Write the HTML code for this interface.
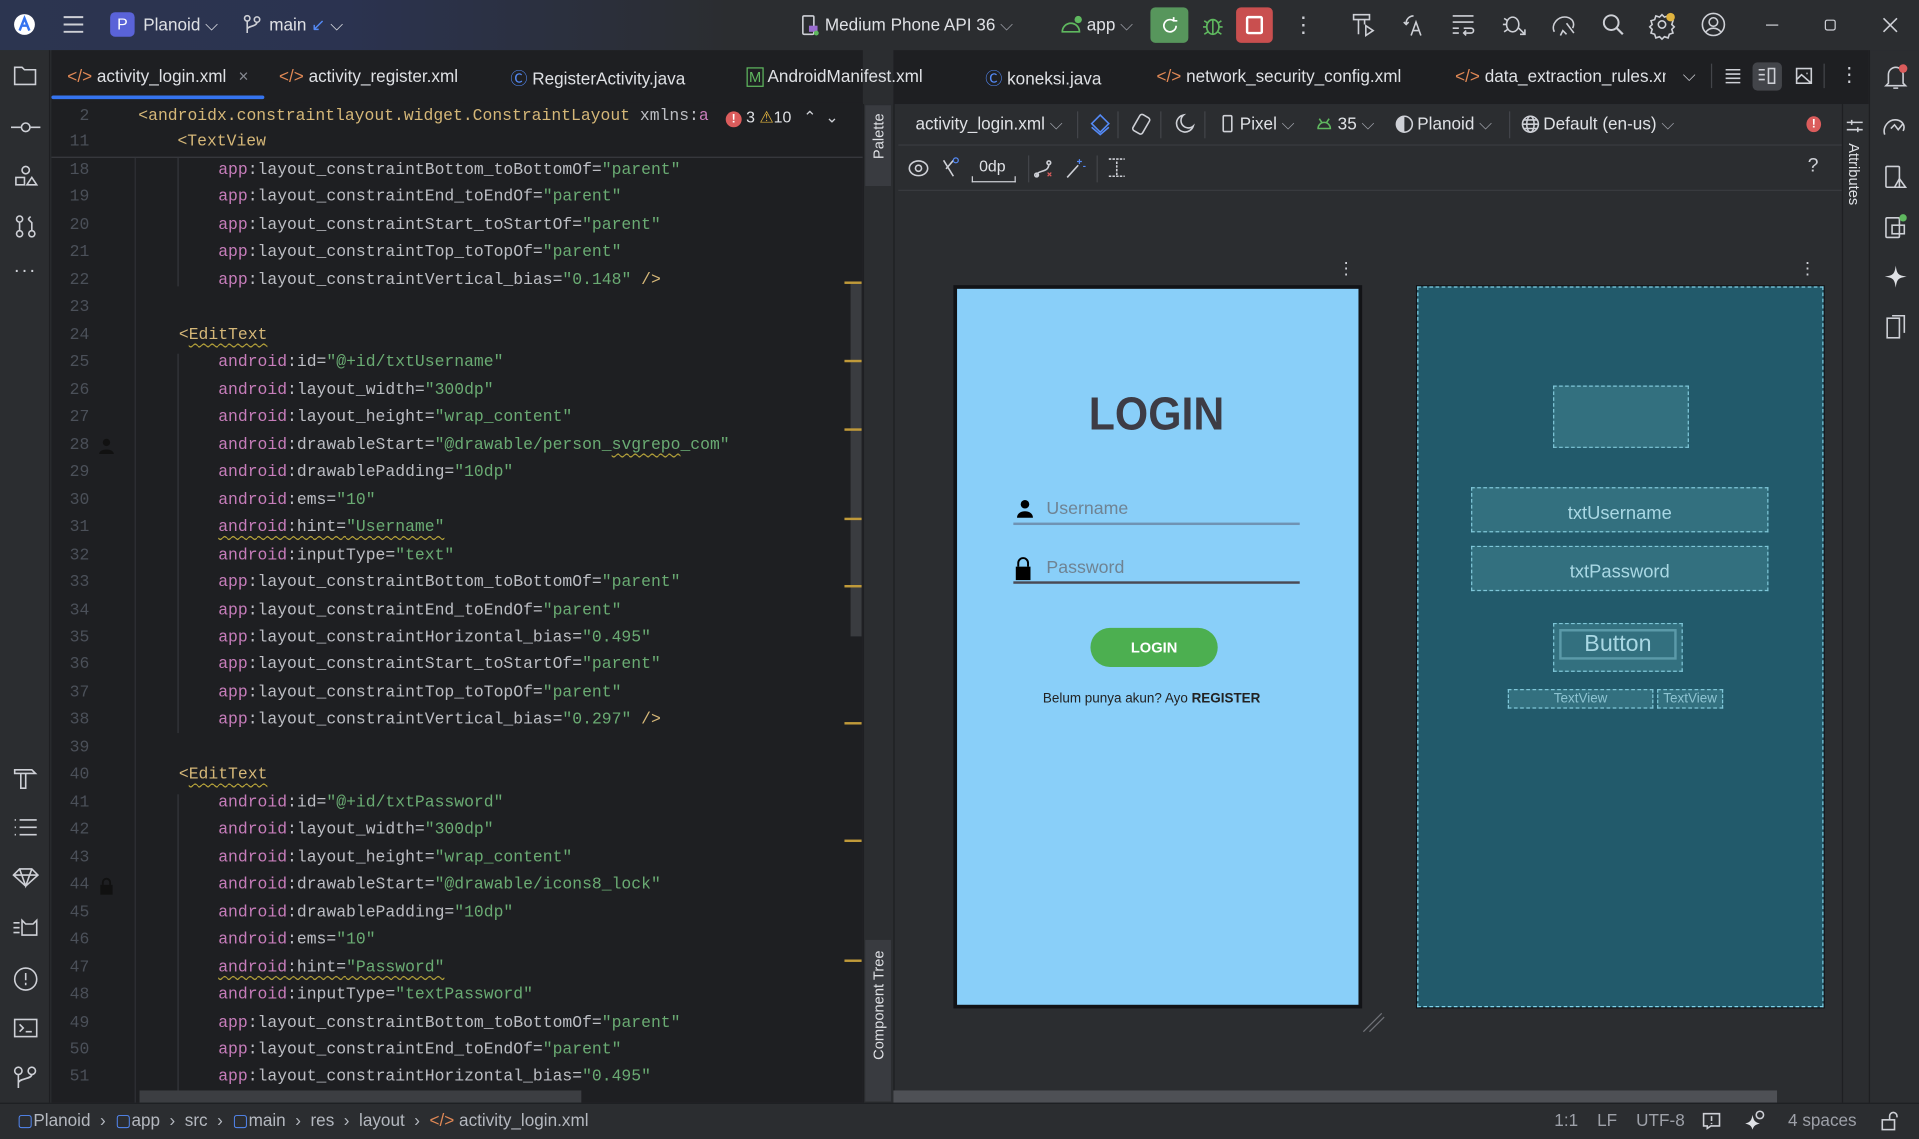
<!DOCTYPE html>
<html><head><meta charset="utf-8"><style>
*{box-sizing:border-box;margin:0;padding:0}
html,body{width:1919px;height:1139px;overflow:hidden;background:#2b2d30}
#w{position:absolute;left:0;top:0;width:1568px;height:931px;transform:scale(1.22385);transform-origin:0 0;font-family:"Liberation Sans",sans-serif;color:#dfe1e5;font-size:14px;background:#2b2d30;overflow:hidden}
.a{position:absolute}
.t{position:absolute;white-space:nowrap}
svg{position:absolute;overflow:visible}
.ic{fill:none;stroke:#ced0d6;stroke-width:1.3}
.code{position:absolute;left:41px;font-family:"Liberation Mono",monospace;font-size:13.4px;white-space:normal}
.ln{color:#4b5059;position:absolute;width:32px;text-align:right;left:0}
.cl{position:absolute;left:73px;color:#bcbec4;white-space:pre}
.p{color:#c77dbb}.g{color:#6aab73}.y{color:#d5b778}
.u{text-decoration:underline wavy #b5a23a;text-decoration-thickness:1px;text-underline-offset:3px}
.mk{position:absolute;left:690px;width:14px;height:2px;background:#c09a3a}
.sep{position:absolute;width:1px;background:#43454a}
#c>div{position:relative;height:22.48px}
</style></head><body><div id="w">
<div class="a" style="left:0;top:0;width:1568px;height:41px;background:linear-gradient(90deg,#2c3550 0%,#2b3350 18%,#2b2d30 38%)"></div>
<svg style="left:11px;top:11px" width="20" height="20"><circle cx="9" cy="9" r="8.5" fill="#fff"/><path d="M5 14 L9 4 L13 14 M6.5 10 H11.5" stroke="#3574f0" stroke-width="2" fill="none"/></svg>
<svg style="left:52px;top:13px" width="16" height="14"><path class="ic" d="M0 1H16M0 7H16M0 13H16" style="stroke-width:1.6"/></svg>
<div class="a" style="left:90px;top:10px;width:20px;height:20px;background:#5a63d8;border-radius:4px;color:#fff;font-size:13px;text-align:center;line-height:20px">P</div>
<div class="t" style="left:117px;top:12px;font-size:14px">Planoid ⌵</div>
<svg style="left:199px;top:12px" width="14" height="16"><circle class="ic" cx="3" cy="3" r="2.2"/><circle class="ic" cx="11" cy="4" r="2.2"/><path class="ic" d="M3 5V15M11 6C11 10 3 9 3 12"/></svg>
<div class="t" style="left:220px;top:12px">main <span style="color:#548af7">↙</span> ⌵</div>
<svg style="left:655px;top:12px" width="16" height="18"><rect class="ic" x="1" y="1" width="9" height="15" rx="1"/><rect x="6" y="9" width="7" height="5" fill="#9a6ccf"/><circle cx="12" cy="15" r="2" fill="#5fb85f"/></svg>
<div class="t" style="left:674px;top:12px">Medium Phone API 36 <span style="color:#9da0a8">⌵</span></div>
<svg style="left:866px;top:12px" width="18" height="16"><path d="M2 14a7 7 0 0 1 14 0z" fill="none" stroke="#5fb85f" stroke-width="1.4"/><circle cx="15" cy="4" r="3" fill="#5fb85f"/></svg>
<div class="t" style="left:888px;top:12px">app <span style="color:#9da0a8">⌵</span></div>
<div class="a" style="left:940px;top:6px;width:31px;height:29px;background:#57965c;border-radius:4px"></div>
<svg style="left:948px;top:13px" width="16" height="16"><path d="M13 8a5 5 0 1 1-2-4M11 1v3h3" fill="none" stroke="#fff" stroke-width="1.4"/></svg>
<svg style="left:982px;top:12px" width="18" height="18"><ellipse cx="9" cy="10" rx="5" ry="6" fill="none" stroke="#5fb85f" stroke-width="1.4"/><path d="M1 10h3M14 10h3M2 5l3 2M16 5l-3 2M2 16l3-2M16 16l-3-2M9 4v12" stroke="#5fb85f" stroke-width="1.3"/></svg>
<div class="a" style="left:1010px;top:6px;width:30px;height:29px;background:#c94f4f;border-radius:4px"></div>
<div class="a" style="left:1018px;top:13px;width:14px;height:15px;border:2px solid #fff;border-radius:2px"></div>
<div class="t" style="left:1056px;top:10px;font-size:18px;color:#ced0d6">⋮</div>
<svg style="left:1105px;top:10px" width="20" height="20"><path class="ic" d="M1 2h13v4H1zM5 6v12M10 6v4M11 11l6 4-6 4z"/></svg>
<svg style="left:1146px;top:10px" width="20" height="20"><path class="ic" d="M9 3a6 6 0 0 0-6 7M1 8l2 2 2-2M7 19l4-11 4 11M8.5 15h5"/></svg>
<svg style="left:1187px;top:12px" width="18" height="16"><path class="ic" d="M0 1h17M0 6h17M0 11h5M0 15h5M9 11h6a2 2 0 0 1 0 4H9M11 13l-2 2 2 2"/></svg>
<svg style="left:1227px;top:10px" width="20" height="20"><ellipse class="ic" cx="9" cy="10" rx="5" ry="6"/><path class="ic" d="M1 10h3M2 5l3 2M2 16l3-2M14 13l5 5M19 14v4h-4"/></svg>
<svg style="left:1267px;top:10px" width="22" height="20"><path class="ic" d="M3 16c-3-6 3-13 10-12 5 1 7 5 5 9M8 19l2-4 3 3M13 9l6 8"/></svg>
<svg style="left:1309px;top:11px" width="18" height="18"><circle class="ic" cx="7.5" cy="7.5" r="6" style="stroke-width:1.6"/><path class="ic" d="M12 12l5 5" style="stroke-width:1.8"/></svg>
<svg style="left:1349px;top:10px" width="20" height="20"><circle class="ic" cx="9" cy="10" r="3"/><path class="ic" d="M9 2l2 2 3-1 1 3 3 1-1 3 2 2-2 2 1 3-3 1-1 3-3-1-2 2-2-2-3 1-1-3-3-1 1-3-2-2 2-2-1-3 3-1 1-3 3 1z"/><circle cx="16" cy="4" r="3.5" fill="#e0b33f"/></svg>
<svg style="left:1390px;top:10px" width="20" height="20"><circle class="ic" cx="10" cy="10" r="9"/><circle class="ic" cx="10" cy="8" r="3.5"/><path class="ic" d="M4 16c3-4 9-4 12 0"/></svg>
<div class="a" style="left:1443px;top:20px;width:10px;height:1.3px;background:#ced0d6"></div>
<div class="a" style="left:1491px;top:16px;width:9px;height:9px;border:1.3px solid #ced0d6;border-radius:2px"></div>
<svg style="left:1539px;top:15px" width="11" height="11"><path class="ic" d="M0 0L11 11M11 0L0 11"/></svg>

<div class="a" style="left:0;top:41px;width:41px;height:860px;background:#2b2d30;border-right:1px solid #1e1f22"></div>
<svg style="left:11px;top:54px" width="20" height="16"><path class="ic" d="M1 1h6l2 2h9v12H1z"/></svg>
<svg style="left:9px;top:100px" width="24" height="8"><circle class="ic" cx="12" cy="4" r="3.5"/><path class="ic" d="M0 4h8M16 4h8"/></svg>
<svg style="left:12px;top:135px" width="18" height="18"><circle class="ic" cx="9" cy="4" r="3"/><rect class="ic" x="1" y="10" width="7" height="6"/><path class="ic" d="M10 16l4-6 4 6z"/></svg>
<svg style="left:12px;top:176px" width="18" height="18"><circle class="ic" cx="4" cy="3" r="2.5"/><circle class="ic" cx="4" cy="15" r="2.5"/><circle class="ic" cx="14" cy="15" r="2.5"/><path class="ic" d="M4 6v6M14 12V6l-3-3M11 3l2-2M11 3l2 2"/></svg>
<div class="t" style="left:11px;top:213px;font-size:16px;color:#ced0d6;letter-spacing:1px">···</div>
<svg style="left:11px;top:627px" width="20" height="18"><path class="ic" d="M1 2h14l3 3H1zM6 5v12h4V5"/></svg>
<svg style="left:11px;top:669px" width="20" height="15"><path class="ic" d="M1 1h1M1 7h1M1 13h1M5 1h14M5 7h14M5 13h14"/></svg>
<svg style="left:10px;top:709px" width="22" height="16"><path class="ic" d="M1 6l5-5h10l5 5-10 9zM1 6h20M6 1l5 14 5-14"/></svg>
<svg style="left:10px;top:750px" width="22" height="16"><path class="ic" d="M1 4h5M1 8h5M1 12h5M8 2l3 3h6l3-3v12H8z"/></svg>
<svg style="left:11px;top:790px" width="20" height="20"><circle class="ic" cx="10" cy="10" r="9"/><path class="ic" d="M10 5v6M10 13v2"/></svg>
<svg style="left:11px;top:832px" width="20" height="16"><rect class="ic" x="1" y="1" width="18" height="14"/><path class="ic" d="M5 5l3 3-3 3M10 11h5"/></svg>
<svg style="left:11px;top:871px" width="20" height="18"><circle class="ic" cx="4" cy="4" r="3"/><circle class="ic" cx="15" cy="4" r="3"/><path class="ic" d="M4 7v11M15 7c0 4-11 3-11 7"/></svg>

<div class="a" style="left:42px;top:41px;width:663px;height:860px;background:#1e1f22"></div>
<div class="a" style="left:730px;top:41px;width:797px;height:44px;background:#1e1f22"></div>
<div class="t" style="left:55px;top:54px"><span style="color:#e08855">&lt;/&gt;</span> activity_login.xml <span style="color:#868991;margin-left:6px">×</span></div>
<div class="a" style="left:42px;top:78px;width:174px;height:3px;background:#3574f0;border-radius:2px"></div>
<div class="t" style="left:228px;top:54px"><span style="color:#e08855">&lt;/&gt;</span> activity_register.xml</div>
<div class="t" style="left:417px;top:54px"><span style="color:#548af7">Ⓒ</span> RegisterActivity.java</div>
<div class="t" style="left:610px;top:54px"><span style="color:#5fb85f;font-size:12px;border:1px solid #5fb85f;padding:0 1px">M</span> AndroidManifest.xml</div>
<div class="t" style="left:805px;top:54px"><span style="color:#548af7">Ⓒ</span> koneksi.java</div>
<div class="t" style="left:945px;top:54px"><span style="color:#e08855">&lt;/&gt;</span> network_security_config.xml</div>
<div class="t" style="left:1189px;top:54px;width:172px;overflow:hidden"><span style="color:#e08855">&lt;/&gt;</span> data_extraction_rules.xml</div>
<div class="t" style="left:1375px;top:53px;color:#ced0d6">⌵</div>
<div class="sep" style="left:1398px;top:52px;height:20px"></div>
<svg style="left:1410px;top:56px" width="12" height="12"><path class="ic" d="M0 1h12M0 4.5h12M0 8h12M0 11.5h12"/></svg>
<div class="a" style="left:1432px;top:51px;width:24px;height:23px;background:#43454a;border-radius:4px"></div>
<svg style="left:1437px;top:55px" width="14" height="14"><path class="ic" d="M0 2h5M0 6h5M0 10h5"/><rect class="ic" x="8" y="1" width="5" height="12"/></svg>
<svg style="left:1467px;top:55px" width="14" height="14"><rect class="ic" x="1" y="1" width="12" height="12"/><path class="ic" d="M1 10l4-4 8 7M9 5h1"/></svg>
<div class="sep" style="left:1490px;top:52px;height:20px"></div>
<div class="t" style="left:1503px;top:51px;color:#ced0d6;font-size:16px">⋮</div>

<div class="a" style="left:42px;top:84px;width:663px;height:45px;background:#1e1f22;border-bottom:1px solid #393b40"></div>
<div class="code" style="top:85px;line-height:22px"><div style="position:absolute;top:0"><span class="ln">2</span><span class="cl" style="left:72px"><span class="y">&lt;androidx.constraintlayout.widget.ConstraintLayout</span> xmlns:<span class="p">a</span></span></div><div style="position:absolute;top:21px"><span class="ln">11</span><span class="cl" style="left:104px"><span class="y">&lt;TextView</span></span></div></div>
<div class="t" style="left:593px;top:88px;font-size:13px"><span style="display:inline-block;width:13px;height:13px;border-radius:50%;background:#db5c5c;color:#fff;text-align:center;font-size:10px;line-height:13px;font-weight:bold">!</span> 3 <span style="color:#e0b33f">⚠</span>10 <span style="color:#ced0d6;margin-left:6px">⌃ &nbsp;⌄</span></div>
<div class="a" style="left:110px;top:129px;width:1px;height:772px;background:#2e3035"></div>
<div class="a" style="left:145px;top:129px;width:1px;height:105px;background:#35373c"></div>
<div class="a" style="left:145px;top:289px;width:1px;height:310px;background:#35373c"></div>
<div class="a" style="left:145px;top:649px;width:1px;height:252px;background:#35373c"></div>
<div class="code" style="top:129px;line-height:22.48px" id="c"><div><span class="ln">18</span><span class="cl">        <span class="p">app</span>:layout_constraintBottom_toBottomOf=<span class="g">"parent"</span></span></div><div><span class="ln">19</span><span class="cl">        <span class="p">app</span>:layout_constraintEnd_toEndOf=<span class="g">"parent"</span></span></div><div><span class="ln">20</span><span class="cl">        <span class="p">app</span>:layout_constraintStart_toStartOf=<span class="g">"parent"</span></span></div><div><span class="ln">21</span><span class="cl">        <span class="p">app</span>:layout_constraintTop_toTopOf=<span class="g">"parent"</span></span></div><div><span class="ln">22</span><span class="cl">        <span class="p">app</span>:layout_constraintVertical_bias=<span class="g">"0.148"</span> <span class="y">/&gt;</span></span></div><div><span class="ln">23</span><span class="cl"> </span></div><div><span class="ln">24</span><span class="cl">    <span class="y">&lt;<span class="u">EditText</span></span></span></div><div><span class="ln">25</span><span class="cl">        <span class="p">android</span>:id=<span class="g">"@+id/txtUsername"</span></span></div><div><span class="ln">26</span><span class="cl">        <span class="p">android</span>:layout_width=<span class="g">"300dp"</span></span></div><div><span class="ln">27</span><span class="cl">        <span class="p">android</span>:layout_height=<span class="g">"wrap_content"</span></span></div><div><span class="ln">28</span><span class="cl">        <span class="p">android</span>:drawableStart=<span class="g">"@drawable/person_<span class="u">svgrepo</span>_com"</span></span></div><div><span class="ln">29</span><span class="cl">        <span class="p">android</span>:drawablePadding=<span class="g">"10dp"</span></span></div><div><span class="ln">30</span><span class="cl">        <span class="p">android</span>:ems=<span class="g">"10"</span></span></div><div><span class="ln">31</span><span class="cl">        <span class="u"><span class="p">android</span>:hint=<span class="g">"Username"</span></span></span></div><div><span class="ln">32</span><span class="cl">        <span class="p">android</span>:inputType=<span class="g">"text"</span></span></div><div><span class="ln">33</span><span class="cl">        <span class="p">app</span>:layout_constraintBottom_toBottomOf=<span class="g">"parent"</span></span></div><div><span class="ln">34</span><span class="cl">        <span class="p">app</span>:layout_constraintEnd_toEndOf=<span class="g">"parent"</span></span></div><div><span class="ln">35</span><span class="cl">        <span class="p">app</span>:layout_constraintHorizontal_bias=<span class="g">"0.495"</span></span></div><div><span class="ln">36</span><span class="cl">        <span class="p">app</span>:layout_constraintStart_toStartOf=<span class="g">"parent"</span></span></div><div><span class="ln">37</span><span class="cl">        <span class="p">app</span>:layout_constraintTop_toTopOf=<span class="g">"parent"</span></span></div><div><span class="ln">38</span><span class="cl">        <span class="p">app</span>:layout_constraintVertical_bias=<span class="g">"0.297"</span> <span class="y">/&gt;</span></span></div><div><span class="ln">39</span><span class="cl"> </span></div><div><span class="ln">40</span><span class="cl">    <span class="y">&lt;<span class="u">EditText</span></span></span></div><div><span class="ln">41</span><span class="cl">        <span class="p">android</span>:id=<span class="g">"@+id/txtPassword"</span></span></div><div><span class="ln">42</span><span class="cl">        <span class="p">android</span>:layout_width=<span class="g">"300dp"</span></span></div><div><span class="ln">43</span><span class="cl">        <span class="p">android</span>:layout_height=<span class="g">"wrap_content"</span></span></div><div><span class="ln">44</span><span class="cl">        <span class="p">android</span>:drawableStart=<span class="g">"@drawable/icons8_lock"</span></span></div><div><span class="ln">45</span><span class="cl">        <span class="p">android</span>:drawablePadding=<span class="g">"10dp"</span></span></div><div><span class="ln">46</span><span class="cl">        <span class="p">android</span>:ems=<span class="g">"10"</span></span></div><div><span class="ln">47</span><span class="cl">        <span class="u"><span class="p">android</span>:hint=<span class="g">"Password"</span></span></span></div><div><span class="ln">48</span><span class="cl">        <span class="p">android</span>:inputType=<span class="g">"textPassword"</span></span></div><div><span class="ln">49</span><span class="cl">        <span class="p">app</span>:layout_constraintBottom_toBottomOf=<span class="g">"parent"</span></span></div><div><span class="ln">50</span><span class="cl">        <span class="p">app</span>:layout_constraintEnd_toEndOf=<span class="g">"parent"</span></span></div><div><span class="ln">51</span><span class="cl">        <span class="p">app</span>:layout_constraintHorizontal_bias=<span class="g">"0.495"</span></span></div></div>
<svg style="left:81px;top:358px" width="12" height="13"><circle cx="6" cy="3.5" r="3" fill="#111"/><path d="M0 13c0-5 12-5 12 0z" fill="#111"/></svg>
<svg style="left:81px;top:717px" width="12" height="14"><path d="M3 6V4a3 3 0 0 1 6 0v2" stroke="#111" fill="none" stroke-width="1.5"/><rect x="1" y="6" width="10" height="8" fill="#111"/></svg>
<div class="a" style="left:695px;top:230px;width:9px;height:290px;background:#3a3c40"></div>
<div class="mk" style="top:230px"></div><div class="mk" style="top:294px"></div><div class="mk" style="top:350px"></div><div class="mk" style="top:423px"></div><div class="mk" style="top:478px"></div><div class="mk" style="top:590px"></div><div class="mk" style="top:686px"></div><div class="mk" style="top:784px"></div>
<div class="a" style="left:114px;top:891px;width:361px;height:10px;background:#3c3e42"></div>

<div class="a" style="left:705px;top:85px;width:25px;height:816px;background:#2b2d30;border-left:1px solid #1e1f22"></div>
<div class="a" style="left:707px;top:86px;width:21px;height:66px;background:#393b40"></div>
<div class="t" style="left:711px;top:130px;transform:rotate(-90deg);transform-origin:0 0;font-size:12px;color:#dfe1e5">Palette</div>
<div class="a" style="left:707px;top:768px;width:21px;height:132px;background:#393b40"></div>
<div class="t" style="left:711px;top:866px;transform:rotate(-90deg);transform-origin:0 0;font-size:12px;color:#dfe1e5">Component Tree</div>

<div class="a" style="left:730px;top:85px;width:775px;height:816px;background:#2b2d30;border-left:1px solid #1e1f22"></div>
<div class="a" style="left:734px;top:118px;width:771px;height:1px;background:#393b40"></div>
<div class="a" style="left:734px;top:155px;width:771px;height:1px;background:#393b40"></div>
<div class="t" style="left:748px;top:93px">activity_login.xml <span style="color:#9da0a8">⌵</span></div>
<div class="sep" style="left:880px;top:91px;height:22px"></div>
<svg style="left:891px;top:93px" width="17" height="17"><path d="M8 1l7 7-7 7-7-7z" fill="none" stroke="#548af7" stroke-width="1.3"/><path d="M1 11l7 6 7-6" fill="none" stroke="#548af7" stroke-width="1.3"/></svg>
<div class="sep" style="left:913px;top:91px;height:22px"></div>
<svg style="left:924px;top:93px" width="17" height="17"><rect class="ic" x="4" y="1" width="9" height="15" rx="2" transform="rotate(30 8.5 8.5)"/></svg>
<div class="sep" style="left:948px;top:91px;height:22px"></div>
<svg style="left:959px;top:93px" width="17" height="17"><path class="ic" d="M8 1a7 7 0 1 0 8 9A6 6 0 0 1 8 1z"/></svg>
<div class="sep" style="left:984px;top:91px;height:22px"></div>
<svg style="left:999px;top:94px" width="8" height="14"><rect class="ic" x="0.5" y="0.5" width="7" height="13" rx="1"/></svg>
<div class="t" style="left:1013px;top:93px">Pixel <span style="color:#9da0a8">⌵</span></div>
<svg style="left:1076px;top:96px" width="12" height="10"><path d="M1 9a5 5 0 0 1 10 0zM2 1l2 3M10 1l-2 3" fill="none" stroke="#5fb85f" stroke-width="1.3"/></svg>
<div class="t" style="left:1093px;top:93px">35 <span style="color:#9da0a8">⌵</span></div>
<svg style="left:1140px;top:94px" width="15" height="15"><circle cx="7.5" cy="7.5" r="6.5" fill="none" stroke="#ced0d6" stroke-width="1.3"/><path d="M7.5 1a6.5 6.5 0 0 0 0 13z" fill="#ced0d6"/></svg>
<div class="t" style="left:1158px;top:93px">Planoid <span style="color:#9da0a8">⌵</span></div>
<div class="sep" style="left:1233px;top:91px;height:22px"></div>
<svg style="left:1243px;top:94px" width="15" height="15"><circle class="ic" cx="7.5" cy="7.5" r="6.5"/><ellipse class="ic" cx="7.5" cy="7.5" rx="3" ry="6.5"/><path class="ic" d="M1 7.5h13M2 4h11M2 11h11"/></svg>
<div class="t" style="left:1261px;top:93px">Default (en-us) <span style="color:#9da0a8">⌵</span></div>
<div class="a" style="left:1476px;top:95px;width:12px;height:13px;border-radius:50%;background:#db5c5c;color:#fff;font-size:10px;font-weight:bold;text-align:center;line-height:13px">!</div>
<svg style="left:742px;top:130px" width="18" height="15"><ellipse class="ic" cx="8.5" cy="7.5" rx="7.5" ry="6"/><circle class="ic" cx="8.5" cy="7.5" r="2.5"/></svg>
<svg style="left:769px;top:128px" width="16" height="18"><path class="ic" d="M2 3l8 13M4 10l6-7"/><circle cx="12" cy="3" r="2" fill="none" stroke="#548af7"/></svg>
<div class="t" style="left:800px;top:128px;font-size:13px">0dp</div>
<div class="a" style="left:794px;top:144px;width:36px;height:5px;border:1px solid #ced0d6;border-top:none"></div>
<div class="sep" style="left:840px;top:127px;height:22px"></div>
<svg style="left:845px;top:130px" width="16" height="16"><path class="ic" d="M2 14c0-6 10-2 10-10"/><circle class="ic" cx="2" cy="13" r="1.5"/><circle class="ic" cx="12" cy="3" r="1.5"/><path d="M11 11l3 3M14 11l-3 3" stroke="#db5c5c"/></svg>
<svg style="left:871px;top:129px" width="16" height="17"><path class="ic" d="M1 16L10 6"/><path d="M11 1v4M9 3h4M14 7h2" stroke="#548af7"/></svg>
<div class="sep" style="left:896px;top:127px;height:22px"></div>
<svg style="left:905px;top:129px" width="16" height="17"><path class="ic" d="M1 1h13M1 15h13M7.5 3v11" stroke-dasharray="2 1"/></svg>
<div class="t" style="left:1477px;top:127px;color:#ced0d6;font-size:16px">?</div>

<div class="t" style="left:1093px;top:211px;color:#ced0d6;font-size:14px">⋮</div>
<div class="t" style="left:1470px;top:211px;color:#ced0d6;font-size:14px">⋮</div>
<div class="a" style="left:779px;top:233px;width:334px;height:591px;background:#121316"></div>
<div class="a" style="left:782px;top:236px;width:328px;height:585px;background:#89cff9"></div>
<div class="t" style="left:782px;top:318px;width:326px;text-align:center;font-size:38px;font-weight:bold;color:#3d3c45;transform:scaleX(0.92)">LOGIN</div>
<svg style="left:830px;top:408px" width="15" height="15"><circle cx="7.5" cy="4" r="3.5" fill="#000"/><path d="M1 15c0-7 13-7 13 0z" fill="#000"/></svg>
<div class="t" style="left:855px;top:408px;font-size:14.5px;color:#6f8393">Username</div>
<div class="a" style="left:828px;top:427px;width:234px;height:2px;background:#6f93b4"></div>
<svg style="left:829px;top:455px" width="14" height="20"><path d="M3 8V5a4 4 0 0 1 8 0v3" stroke="#000" fill="none" stroke-width="1.6"/><rect x="1" y="8" width="12" height="11" fill="#000"/></svg>
<div class="t" style="left:855px;top:456px;font-size:14.5px;color:#6f8393">Password</div>
<div class="a" style="left:828px;top:475px;width:234px;height:2px;background:#4a4a55"></div>
<div class="a" style="left:891px;top:513px;width:104px;height:32px;background:#4caf50;border-radius:16px;color:#fff;font-size:12px;font-weight:bold;text-align:center;line-height:32px">LOGIN</div>
<div class="t" style="left:782px;top:565px;width:318px;text-align:center;font-size:11px;color:#222">Belum punya akun? Ayo <b>REGISTER</b></div>
<svg style="left:1113px;top:826px" width="20" height="18"><path d="M1 17L16 2M6 17L18 5" stroke="#6f7177" stroke-width="1"/></svg>
<div class="a" style="left:1157px;top:233px;width:334px;height:591px;background:#121316"></div>
<div class="a" style="left:1158px;top:234px;width:332px;height:589px;background:#225a6b;border:1px dashed #7fd3ea"></div>
<div class="a" style="left:1269px;top:315px;width:111px;height:51px;background:#33707f;border:1px dashed #7fc6d8"></div>
<div class="a" style="left:1202px;top:398px;width:243px;height:37px;background:#33707f;border:1px dashed #7fc6d8;color:#a9d8e4;font-size:15px;text-align:center;line-height:42px">txtUsername</div>
<div class="a" style="left:1202px;top:446px;width:243px;height:37px;background:#33707f;border:1px dashed #7fc6d8;color:#a9d8e4;font-size:15px;text-align:center;line-height:42px">txtPassword</div>
<div class="a" style="left:1269px;top:509px;width:106px;height:40px;background:#33707f;border:1px dashed #7fc6d8"></div>
<div class="a" style="left:1274px;top:514px;width:96px;height:25px;border:2px solid #5b9aa9;color:#a9d8e4;font-size:19px;text-align:center;line-height:21px">Button</div>
<div class="a" style="left:1232px;top:563px;width:119px;height:16px;background:#33707f;border:1px dashed #7fc6d8;color:#8ec3d1;font-size:11px;text-align:center;line-height:14px">TextView</div>
<div class="a" style="left:1354px;top:563px;width:54px;height:16px;background:#33707f;border:1px dashed #7fc6d8;color:#8ec3d1;font-size:11px;text-align:center;line-height:14px">TextView</div>
<div class="a" style="left:730px;top:891px;width:722px;height:10px;background:#4e5055"></div>

<div class="a" style="left:1505px;top:85px;width:22px;height:816px;background:#2b2d30;border-left:1px solid #1e1f22"></div>
<svg style="left:1509px;top:97px" width="13" height="13"><path class="ic" d="M0 3h13M0 9h13M4 1v4M9 7v4"/></svg>
<div class="t" style="left:1522px;top:117px;transform:rotate(90deg);transform-origin:0 0;font-size:12px">Attributes</div>
<div class="a" style="left:1527px;top:41px;width:41px;height:860px;background:#2b2d30;border-left:1px solid #1e1f22"></div>
<svg style="left:1539px;top:52px" width="20" height="22"><path class="ic" d="M4 16V9a6 6 0 0 1 12 0v7l2 2H2zM8 20h4"/><circle cx="16" cy="4" r="3.5" fill="#db5c5c"/></svg>
<svg style="left:1538px;top:94px" width="22" height="18"><path class="ic" d="M2 16c-2-6 3-13 10-12 5 1 7 5 5 9M7 11l3-3 3 4 4-5"/></svg>
<svg style="left:1540px;top:135px" width="18" height="20"><rect class="ic" x="1" y="1" width="11" height="17" rx="1"/><path class="ic" d="M8 18l4-7 5 7z"/></svg>
<svg style="left:1540px;top:175px" width="18" height="20"><rect class="ic" x="1" y="3" width="11" height="16" rx="1"/><rect class="ic" x="6" y="9" width="10" height="7"/><circle cx="15" cy="3" r="3" fill="#5fb85f"/></svg>
<svg style="left:1540px;top:217px" width="18" height="18"><path d="M9 0C10 7 11 8 18 9 11 10 10 11 9 18 8 11 7 10 0 9 7 8 8 7 9 0z" fill="#dfe1e5"/></svg>
<svg style="left:1541px;top:257px" width="16" height="20"><rect class="ic" x="1" y="3" width="10" height="16"/><path class="ic" d="M5 1h10v14"/></svg>

<div class="a" style="left:0;top:901px;width:1568px;height:30px;background:#2b2d30;border-top:1px solid #1e1f22"></div>
<div class="t" style="left:14px;top:907px;font-size:14px;color:#b4b8bf"><span style="color:#548af7">▢</span>Planoid &nbsp;›&nbsp; <span style="color:#548af7">▢</span>app &nbsp;›&nbsp; src &nbsp;›&nbsp; <span style="color:#548af7">▢</span>main &nbsp;›&nbsp; res &nbsp;›&nbsp; layout &nbsp;›&nbsp; <span style="color:#e08855">&lt;/&gt;</span> activity_login.xml</div>
<div class="t" style="left:1270px;top:907px;font-size:14px;color:#9da0a8">1:1 &nbsp;&nbsp; LF &nbsp;&nbsp; UTF-8</div>
<svg style="left:1391px;top:909px" width="15" height="14"><path class="ic" d="M1 1h13v10H7l-3 2v-2H1zM7.5 3v4M7.5 8.5v1"/></svg>
<svg style="left:1426px;top:907px" width="16" height="16"><path d="M6 4C7 9 8 10 12 11 8 12 7 13 6 16 5 13 4 12 0 11 4 10 5 9 6 4z" fill="#dfe1e5"/><circle class="ic" cx="12" cy="4" r="3"/></svg>
<div class="t" style="left:1461px;top:907px;font-size:14px;color:#9da0a8">4 spaces</div>
<svg style="left:1537px;top:908px" width="14" height="16"><rect class="ic" x="1" y="7" width="10" height="8"/><path class="ic" d="M7 7V4a3 3 0 0 1 6 0v1"/></svg>
</div></body></html>
